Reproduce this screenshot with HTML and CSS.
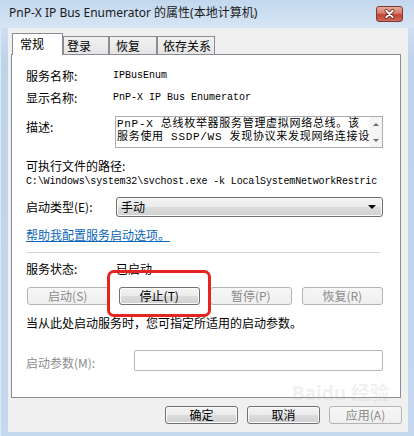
FILE: index.html
```html
<!DOCTYPE html>
<html lang="zh-CN">
<head>
  <meta charset="UTF-8">
  <title>PnP-X IP Bus Enumerator 的属性(本地计算机)</title>
  <link rel="stylesheet" href="styles.css">
</head>
<body>
  <div class="window">
    <div class="titlebar">
      <span class="title">PnP-X IP Bus Enumerator 的属性(本地计算机)</span>
      <span class="close">
        <svg width="27" height="16" viewBox="0 0 27 16">
          <path d="M10 4.5 L17 11.5 M17 4.5 L10 11.5" stroke="#5a1a12" stroke-width="3.6" stroke-linecap="round"/>
          <path d="M10 4.5 L17 11.5 M17 4.5 L10 11.5" stroke="#fff" stroke-width="2" stroke-linecap="round"/>
        </svg>
      </span>
    </div>

    <div class="client">
      <div class="tabs">
        <span class="tab active">常规</span>
        <span class="tab t-logon">登录</span>
        <span class="tab t-recover">恢复</span>
        <span class="tab t-deps">依存关系</span>
      </div>

      <div class="panel">
        <div class="row r-name">
          <span class="label">服务名称:</span>
          <span class="value">IPBusEnum</span>
        </div>
        <div class="row r-display">
          <span class="label">显示名称:</span>
          <span class="value">PnP-X IP Bus Enumerator</span>
        </div>
        <div class="row r-desc">
          <span class="label">描述:</span>
          <div class="desc">
            <div class="desc-text">
              <div>PnP-X 总线枚举器服务管理虚拟网络总线。该</div>
              <div>服务使用 SSDP/WS 发现协议来发现网络连接设</div>
            </div>
            <div class="scroll">
              <span class="arr up"></span>
              <span class="arr down"></span>
            </div>
          </div>
        </div>
        <div class="path-label">可执行文件的路径:</div>
        <div class="path">C:\Windows\system32\svchost.exe -k LocalSystemNetworkRestric</div>
        <div class="row r-type">
          <span class="label">启动类型(E):</span>
          <div class="select">
            <span>手动</span>
            <span class="caret"></span>
          </div>
        </div>
        <a class="help" href="#">帮助我配置服务启动选项。</a>
        <div class="sep"></div>
        <div class="row r-status">
          <span class="label">服务状态:</span>
          <span>已启动</span>
        </div>
        <div class="actions">
          <button class="btn" disabled>启动(S)</button>
          <button class="btn">停止(T)</button>
          <button class="btn" disabled>暂停(P)</button>
          <button class="btn" disabled>恢复(R)</button>
        </div>
        <p class="note">当从此处启动服务时，您可指定所适用的启动参数。</p>
        <div class="row r-param">
          <span class="label muted">启动参数(M):</span>
          <div class="input"></div>
        </div>
      </div>

      <div class="footer">
        <button class="btn">确定</button>
        <button class="btn">取消</button>
        <button class="btn" disabled>应用(A)</button>
      </div>
    </div>

    <div class="highlight"></div>
    <div class="watermark">Baidu 经验</div>
  </div>
</body>
</html>
```

FILE: styles.css
```css
body {
  margin: 0;
  font-family: "Noto Sans CJK SC", sans-serif;
  font-size: 12px;
  color: #000;
  background: #c3d7ed;
}
.window {
  position: relative;
  width: 414px;
  height: 436px;
  box-sizing: border-box;
  padding: 0 6px 4px 8px;
  background: linear-gradient(#c0d5ec, #cfdff1 28px, #bdd3ea 60px, #c4d8ee);
  box-shadow: inset 1px 0 0 #dce8f5;
  overflow: hidden;
}
.titlebar {
  height: 28px;
  display: flex;
  align-items: center;
  justify-content: space-between;
  margin-left: -8px;
  margin-right: -6px;
  padding: 0 11px 3px 9px;
  box-sizing: border-box;
  background: linear-gradient(#c2d7ee, #d7e5f4);
}
.title {
  font-family: "Noto Sans", "Noto Sans CJK SC", sans-serif;
  font-size: 12px;
  color: #1a1a1a;
  line-height: 16px;
}
.close {
  width: 27px;
  height: 16px;
  margin-top: 3px;
  border: 1px solid #7d3b33;
  border-radius: 3px;
  box-sizing: border-box;
  background: linear-gradient(#e8a99b, #d47a6b 45%, #c2412f 55%, #d3695a);
  display: flex;
  align-items: center;
  justify-content: center;
}
.close svg {
  display: block;
}
.client {
  height: 404px;
  background: #f0f0f0;
  padding-top: 5px;
  box-sizing: border-box;
}

/* tabs */
.tabs {
  display: flex;
  align-items: flex-end;
  height: 21px;
  margin-left: 4px;
  position: relative;
  z-index: 1;
}
.tab {
  height: 18px;
  box-sizing: border-box;
  border: 1px solid #898c95;
  border-bottom: none;
  background: linear-gradient(#f2f2f2, #e4e4e4);
  line-height: 17px;
  padding-left: 3px;
}
.tab.active {
  width: 51px;
  height: 22px;
  margin-bottom: -1px;
  background: #fff;
  padding-left: 7px;
  line-height: 20px;
}
.t-logon { width: 46px; }
.t-recover { width: 48px; padding-left: 6px; }
.t-deps { width: 58px; padding-left: 5px; }

/* panel */
.panel {
  height: 344px;
  box-sizing: border-box;
  margin: 0 7px 0 3px;
  padding: 14px 17px 0 14px;
  background: #fff;
  border: 1px solid #898c95;
}
.row {
  display: flex;
  align-items: center;
  line-height: 14px;
}
.label {
  width: 87px;
  flex: none;
}
.value {
  font-family: "Liberation Mono", monospace;
  font-size: 10px;
}
.r-display { margin-top: 8px; }
.r-desc {
  margin-top: 11px;
  align-items: flex-start;
}
.r-desc .label {
  padding-top: 4px;
  width: 89px;
}
.desc {
  flex: 1;
  height: 32px;
  box-sizing: border-box;
  border: 1px solid #abadb3;
  display: flex;
  overflow: hidden;
}
.desc-text {
  flex: 1;
  font-family: "Liberation Mono", "Noto Sans CJK SC", monospace;
  font-size: 11px;
  letter-spacing: 0.7px;
  line-height: 13px;
  padding: 1px 0 0 1px;
  white-space: nowrap;
  overflow: hidden;
}
.scroll {
  width: 13px;
  background: #f4f4f4;
  display: flex;
  flex-direction: column;
  justify-content: space-between;
  align-items: center;
  padding: 6px 0 5px;
  box-sizing: border-box;
}
.arr {
  width: 0;
  height: 0;
  border-left: 3px solid transparent;
  border-right: 3px solid transparent;
}
.arr.up { border-bottom: 3px solid #6d6d6d; }
.arr.down { border-top: 3px solid #6d6d6d; }
.path-label {
  margin-top: 11px;
  line-height: 14px;
}
.path {
  margin-top: 2px;
  font-family: "Liberation Mono", monospace;
  font-size: 10px;
  letter-spacing: -0.15px;
  line-height: 14px;
  white-space: nowrap;
}
.r-type { margin-top: 8px; }
.r-type .label { width: 90px; }
.select {
  flex: 1;
  height: 20px;
  box-sizing: border-box;
  border: 1px solid #707070;
  border-radius: 3px;
  background: linear-gradient(#f3f3f3, #ebebeb 50%, #dddddd 50%, #d0d0d0);
  box-shadow: inset 0 0 0 1px #fbfbfb;
  display: flex;
  align-items: center;
  justify-content: space-between;
  padding: 0 6px 0 4px;
}
.caret {
  width: 0;
  height: 0;
  border-left: 4px solid transparent;
  border-right: 4px solid transparent;
  border-top: 4px solid #000;
}
.help {
  display: inline-block;
  margin-top: 11px;
  line-height: 14px;
  color: #0b66b8;
  text-decoration: underline;
}
.sep {
  margin-top: 9px;
  margin-right: 3px;
  height: 1px;
  background: #d5d5d5;
}
.r-status { margin-top: 9px; }
.r-status .label { width: 90px; }
.actions {
  display: flex;
  gap: 10px;
  margin-top: 11px;
  margin-left: 1px;
}
.actions .btn {
  flex: 1;
}
.btn {
  height: 18px;
  padding: 0;
  box-sizing: border-box;
  font-family: "Noto Sans CJK SC", sans-serif;
  font-size: 12px;
  line-height: 16px;
  color: #000;
  border: 1px solid #707070;
  border-radius: 3px;
  background: linear-gradient(#f3f3f3, #ebebeb 50%, #dddddd 50%, #cfcfcf);
  box-shadow: inset 0 0 0 1px #fbfbfb;
}
.btn:disabled {
  color: #8a8a8a;
  border-color: #b2b5b8;
  background: linear-gradient(#f6f6f6, #efefef);
  box-shadow: none;
}
.note {
  margin: 11px 0 0;
  line-height: 14px;
}
.r-param {
  margin-top: 20px;
  align-items: flex-start;
}
.r-param .label {
  width: 108px;
  padding-top: 6px;
}
.muted {
  color: #8d8d8d;
}
.input {
  flex: 1;
  height: 21px;
  box-sizing: border-box;
  border: 1px solid #b3b6bb;
  border-radius: 2px;
}

/* footer */
.footer {
  display: flex;
  justify-content: flex-end;
  gap: 9px;
  margin-top: 8px;
  padding-right: 6px;
}
.footer .btn {
  width: 73px;
}

/* overlays */
.highlight {
  position: absolute;
  left: 107px;
  top: 270px;
  width: 104px;
  height: 47px;
  box-sizing: border-box;
  border: 3px solid #e3241f;
  border-radius: 7px;
}
.watermark {
  position: absolute;
  left: 292px;
  top: 382px;
  font-family: "Noto Sans", "Noto Sans CJK SC", sans-serif;
  font-size: 19px;
  line-height: 22px;
  font-weight: bold;
  color: rgba(190, 190, 190, 0.22);
  pointer-events: none;
}
```
